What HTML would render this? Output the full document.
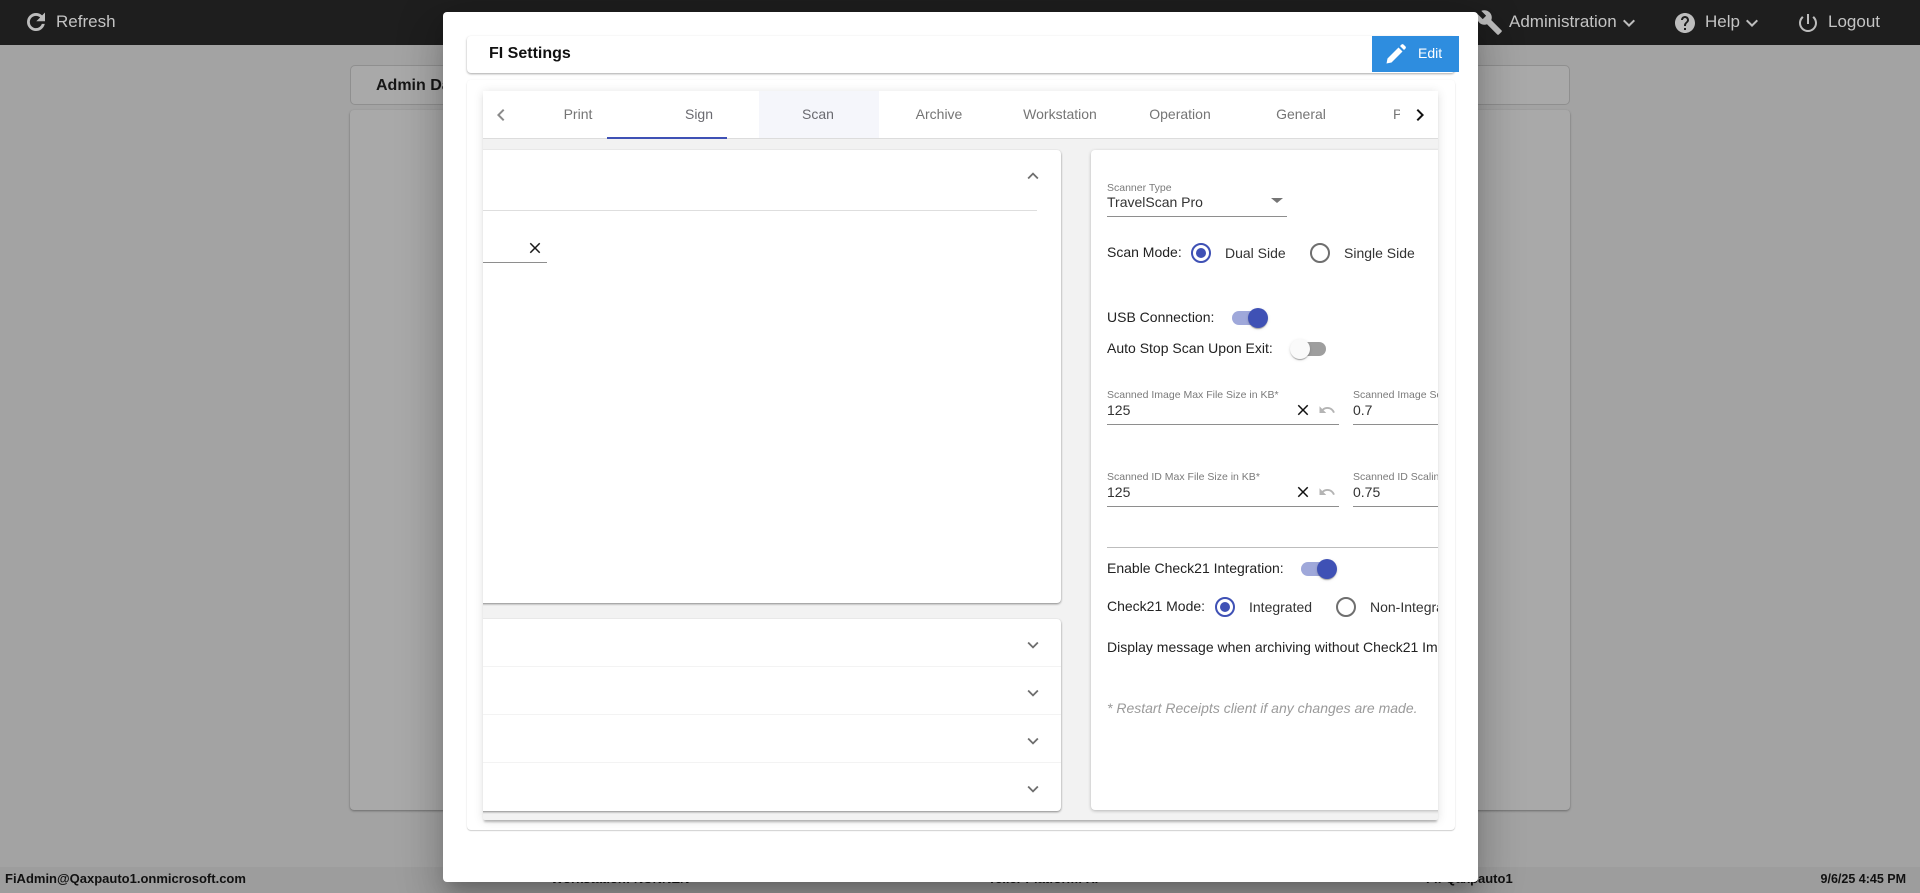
<!DOCTYPE html>
<html lang="en">
<head>
<meta charset="utf-8">
<title>FI Settings</title>
<style>
html,body{margin:0;padding:0;width:1920px;height:893px;overflow:hidden;background:#a3a3a3;font-family:"Liberation Sans",Arial,sans-serif}
*{box-sizing:border-box}
.a{position:absolute}
.t{position:absolute;white-space:nowrap;line-height:16px;font-size:14px}
svg{position:absolute;display:block}
.lbl{font-size:10.5px;color:#7a7a7a}
.val{color:#333}
.dark{color:#222}
.line{position:absolute;height:1px;background:#8e8e8e}
.radio{position:absolute;width:20px;height:20px;border-radius:50%;border:2px solid #6f6f6f;background:#fff}
.radio.on{border-color:#3f51b5}
.radio.on:after{content:"";position:absolute;left:3px;top:3px;width:10px;height:10px;border-radius:50%;background:#3f51b5}
.track{position:absolute;width:34px;height:14px;border-radius:7px}
.thumb{position:absolute;width:20px;height:20px;border-radius:50%;box-shadow:0 2px 1px -1px rgba(0,0,0,.2),0 1px 1px 0 rgba(0,0,0,.14),0 1px 3px 0 rgba(0,0,0,.12)}
.tab{position:absolute;top:0;height:48px;line-height:47px;width:120px;text-align:center;font-size:14px;color:#757575;white-space:nowrap}
.top{position:absolute;white-space:nowrap;font-size:17px;line-height:20px;color:#c4c4c4}
.foot{position:absolute;top:871px;white-space:nowrap;font-size:13px;line-height:16px;font-weight:bold;color:#111}
</style>
</head>
<body>

<!-- dimmed background page -->
<div class="a" style="left:0;top:0;width:1920px;height:45px;background:#1e1e1e"></div>
<svg style="left:23px;top:9px" width="26" height="26" viewBox="0 0 24 24" fill="#bdbdbd" stroke="#bdbdbd" stroke-width=".6"><path d="M17.65 6.35A7.958 7.958 0 0 0 12 4c-4.42 0-7.99 3.58-7.99 8s3.57 8 7.99 8c3.73 0 6.84-2.55 7.73-6h-2.08A5.99 5.99 0 0 1 12 18c-3.31 0-6-2.69-6-6s2.69-6 6-6c1.66 0 3.14.69 4.22 1.78L13 11h7V4l-2.35 2.35z"/></svg>
<div class="top" style="left:56px;top:12px">Refresh</div>
<svg style="left:1476px;top:9px" width="27" height="27" viewBox="0 0 24 24" fill="#bdbdbd"><path d="M22.7 19l-9.1-9.1c.9-2.3.4-5-1.5-6.9-2-2-5-2.4-7.4-1.3L9 6 6 9 1.6 4.7C.4 7.1.9 10.1 2.9 12.1c1.9 1.9 4.6 2.4 6.9 1.5l9.1 9.1c.4.4 1 .4 1.4 0l2.3-2.3c.5-.4.5-1.1.1-1.4z"/></svg>
<div class="top" style="left:1509px;top:12px">Administration</div>
<svg style="left:1617px;top:11px" width="24" height="24" viewBox="0 0 24 24" fill="#bdbdbd"><path d="M16.59 8.59L12 13.17 7.41 8.59 6 10l6 6 6-6z"/></svg>
<svg style="left:1673px;top:11px" width="24" height="24" viewBox="0 0 24 24" fill="#bdbdbd"><path d="M12 2C6.48 2 2 6.48 2 12s4.48 10 10 10 10-4.48 10-10S17.52 2 12 2zm1 17h-2v-2h2v2zm2.07-7.75l-.9.92C13.45 12.9 13 13.5 13 15h-2v-.5c0-1.1.45-2.1 1.17-2.83l1.24-1.26c.37-.36.59-.86.59-1.41 0-1.1-.9-2-2-2s-2 .9-2 2H8c0-2.21 1.79-4 4-4s4 1.79 4 4c0 .88-.36 1.68-.93 2.25z"/></svg>
<div class="top" style="left:1705px;top:12px">Help</div>
<svg style="left:1740px;top:11px" width="24" height="24" viewBox="0 0 24 24" fill="#bdbdbd"><path d="M16.59 8.59L12 13.17 7.41 8.59 6 10l6 6 6-6z"/></svg>
<svg style="left:1796px;top:11px" width="24" height="24" viewBox="0 0 24 24" fill="#bdbdbd"><path d="M13 3h-2v10h2V3zm4.83 2.17l-1.42 1.42C17.99 7.86 19 9.81 19 12c0 3.87-3.13 7-7 7s-7-3.13-7-7c0-2.19 1.01-4.14 2.58-5.42L6.17 5.17C4.23 6.82 3 9.26 3 12c0 4.97 4.03 9 9 9s9-4.03 9-9c0-2.74-1.23-5.18-3.17-6.83z"/></svg>
<div class="top" style="left:1828px;top:12px">Logout</div>

<div class="a" style="left:350px;top:65px;width:1220px;height:40px;background:#a9a9a9;border:1px solid #8f8f8f;border-radius:5px"></div>
<div class="t" style="left:376px;top:78px;font-size:16px;font-weight:bold;color:#161616">Admin Dashboard</div>
<div class="a" style="left:350px;top:110px;width:1220px;height:700px;background:#a9a9a9;border-radius:4px;box-shadow:0 1px 2px rgba(0,0,0,.35)"></div>

<div class="a" style="left:0;top:867px;width:1920px;height:26px;background:#9d9d9d"></div>
<div class="foot" style="left:5px">FiAdmin@Qaxpauto1.onmicrosoft.com</div>
<div class="foot" style="left:551px">Workstation: NUNNEN</div>
<div class="foot" style="left:988px">Teller Platform: XI</div>
<div class="foot" style="left:1426px">FI: Qaxpauto1</div>
<div class="foot" style="left:1800px;width:106px;text-align:right;font-size:12.5px">9/6/25 4:45 PM</div>

<!-- modal -->
<div class="a" style="left:443px;top:12px;width:1035px;height:870px;background:#fff;border-radius:4px;box-shadow:0 11px 15px -7px rgba(0,0,0,.2),0 24px 38px 3px rgba(0,0,0,.14),0 9px 46px 8px rgba(0,0,0,.12)"></div>

<!-- FI settings title card -->
<div class="a" style="left:467px;top:36px;width:988px;height:37px;background:#fff;border-radius:4px;box-shadow:0 1px 2px rgba(0,0,0,.35)"></div>
<div class="t" style="left:489px;top:46px;font-size:16px;font-weight:bold;color:#111">FI Settings</div>
<div class="a" style="left:1372px;top:36px;width:87px;height:36px;background:#2e8ddf"></div>
<svg style="left:1384px;top:42px" width="24" height="24" viewBox="0 0 24 24" fill="#fff"><path d="M2.5 21.5L3.5 16.5 14.5 5.5 18.5 9.5 7.5 20.5zM16 4l1.3-1.3a1.7 1.7 0 0 1 2.4 0l1.6 1.6a1.7 1.7 0 0 1 0 2.4L20 8z"/></svg>
<div class="t" style="left:1418px;top:45px;color:#fff">Edit</div>

<!-- outer card -->
<div class="a" style="left:467px;top:80px;width:988px;height:750px;background:#fff;border-radius:4px;box-shadow:0 1px 1px rgba(0,0,0,.18),0 0 2px rgba(0,0,0,.05)"></div>

<!-- tab panel -->
<div class="a" style="left:483px;top:91px;width:955px;height:729px;background:#f2f2f2;border-radius:2px;box-shadow:0 3px 2px -1px rgba(0,0,0,.26),0 1px 10px rgba(0,0,0,.12)"></div>
<div class="a" style="left:483px;top:91px;width:955px;height:729px;overflow:hidden">
  <!-- tab bar -->
  <div class="a" style="left:0;top:0;width:955px;height:48px;background:#fff;border-bottom:1px solid #dcdcdc">
    <div class="a" style="left:276px;top:0;width:120px;height:47px;background:#f5f6fb"></div>
    <div class="tab" style="left:35px">Print</div>
    <div class="tab" style="left:156px;color:#6a6a70">Sign</div>
    <div class="tab" style="left:275px;color:#6a6a70">Scan</div>
    <div class="tab" style="left:396px">Archive</div>
    <div class="tab" style="left:517px">Workstation</div>
    <div class="tab" style="left:637px">Operation</div>
    <div class="tab" style="left:758px">General</div>
    <div class="t" style="left:910px;top:15px;width:7px;overflow:hidden;color:#757575">Preferences</div>
    <div class="a" style="left:124px;top:46px;width:120px;height:2px;background:#3f51b5"></div>
    <svg style="left:6px;top:12px" width="24" height="24" viewBox="0 0 24 24" fill="#8a8a8a"><path d="M15.41 7.41L14 6l-6 6 6 6 1.41-1.41L10.83 12z"/></svg>
    <div class="a" style="left:920px;top:0;width:35px;height:47px;background:#fff"></div>
    <svg style="left:925px;top:12px" width="24" height="24" viewBox="0 0 24 24" fill="#111"><path d="M10 6L8.59 7.41 13.17 12l-4.58 4.59L10 18l6-6z"/></svg>
  </div>

  <!-- left top card -->
  <div class="a" style="left:-6px;top:59px;width:584px;height:453px;background:#fff;border-radius:4px;box-shadow:0 1px 2px rgba(0,0,0,.45)"></div>
  <svg style="left:539px;top:74px" width="22" height="22" viewBox="0 0 24 24" fill="#6e6e6e"><path d="M12 8l-6 6 1.41 1.41L12 10.83l4.59 4.58L18 14z"/></svg>
  <div class="a" style="left:0;top:119px;width:554px;height:1px;background:#dedede"></div>
  <svg style="left:43px;top:148px" width="18" height="18" viewBox="0 0 24 24" fill="#1a1a1a"><path d="M19 6.41L17.59 5 12 10.59 6.41 5 5 6.41 10.59 12 5 17.59 6.41 19 12 13.41 17.59 19 19 17.59 13.41 12z"/></svg>
  <div class="line" style="left:0;top:171px;width:64px"></div>

  <!-- left lower accordion -->
  <div class="a" style="left:-6px;top:528px;width:584px;height:192px;background:#fff;border-radius:4px;box-shadow:0 1px 2px rgba(0,0,0,.45)"></div>
  <div class="a" style="left:0;top:575px;width:578px;height:1px;background:#f3f3f3"></div>
  <div class="a" style="left:0;top:623px;width:578px;height:1px;background:#f3f3f3"></div>
  <div class="a" style="left:0;top:671px;width:578px;height:1px;background:#f3f3f3"></div>
  <svg style="left:539px;top:543px" width="22" height="22" viewBox="0 0 24 24" fill="#6e6e6e"><path d="M16.59 8.59L12 13.17 7.41 8.59 6 10l6 6 6-6z"/></svg>
  <svg style="left:539px;top:591px" width="22" height="22" viewBox="0 0 24 24" fill="#6e6e6e"><path d="M16.59 8.59L12 13.17 7.41 8.59 6 10l6 6 6-6z"/></svg>
  <svg style="left:539px;top:639px" width="22" height="22" viewBox="0 0 24 24" fill="#6e6e6e"><path d="M16.59 8.59L12 13.17 7.41 8.59 6 10l6 6 6-6z"/></svg>
  <svg style="left:539px;top:687px" width="22" height="22" viewBox="0 0 24 24" fill="#6e6e6e"><path d="M16.59 8.59L12 13.17 7.41 8.59 6 10l6 6 6-6z"/></svg>

  <!-- right card -->
  <div class="a" style="left:608px;top:59px;width:360px;height:660px;background:#fff;border-radius:4px;box-shadow:0 1px 3px rgba(0,0,0,.25)"></div>

  <div class="t lbl" style="left:624px;top:89px">Scanner Type</div>
  <div class="t val" style="left:624px;top:103px">TravelScan Pro</div>
  <div class="a" style="left:788px;top:107px;width:0;height:0;border-left:6px solid transparent;border-right:6px solid transparent;border-top:5px solid #757575"></div>
  <div class="line" style="left:624px;top:125px;width:180px"></div>

  <div class="t dark" style="left:624px;top:153px">Scan Mode:</div>
  <div class="radio on" style="left:708px;top:152px"></div>
  <div class="t val" style="left:742px;top:154px">Dual Side</div>
  <div class="radio" style="left:827px;top:152px"></div>
  <div class="t val" style="left:861px;top:154px">Single Side</div>

  <div class="t dark" style="left:624px;top:218px">USB Connection:</div>
  <div class="track" style="left:749px;top:220px;background:#9fa8da"></div>
  <div class="thumb" style="left:765px;top:217px;background:#3f51b5"></div>

  <div class="t dark" style="left:624px;top:249px">Auto Stop Scan Upon Exit:</div>
  <div class="track" style="left:809px;top:251px;background:#9e9e9e"></div>
  <div class="thumb" style="left:807px;top:248px;background:#fafafa"></div>

  <div class="t lbl" style="left:624px;top:296px">Scanned Image Max File Size in KB*</div>
  <div class="t val" style="left:624px;top:311px">125</div>
  <svg style="left:811px;top:310px" width="18" height="18" viewBox="0 0 24 24" fill="#111"><path d="M19 6.41L17.59 5 12 10.59 6.41 5 5 6.41 10.59 12 5 17.59 6.41 19 12 13.41 17.59 19 19 17.59 13.41 12z"/></svg>
  <svg style="left:835px;top:310px" width="18" height="18" viewBox="0 0 24 24" fill="#b4b4b4"><path d="M12.5 8c-2.65 0-5.05.99-6.9 2.6L2 7v9h9l-3.62-3.62c1.39-1.16 3.16-1.88 5.12-1.88 3.54 0 6.55 2.31 7.6 5.5l2.37-.78C21.08 11.03 17.15 8 12.5 8z"/></svg>
  <div class="line" style="left:624px;top:333px;width:232px"></div>
  <div class="a" style="left:870px;top:290px;width:85px;height:50px;overflow:hidden">
    <div class="t lbl" style="left:0;top:6px">Scanned Image Scaling Factor</div>
    <div class="t val" style="left:0;top:21px">0.7</div>
    <div class="line" style="left:0;top:43px;width:85px"></div>
  </div>

  <div class="t lbl" style="left:624px;top:378px">Scanned ID Max File Size in KB*</div>
  <div class="t val" style="left:624px;top:393px">125</div>
  <svg style="left:811px;top:392px" width="18" height="18" viewBox="0 0 24 24" fill="#111"><path d="M19 6.41L17.59 5 12 10.59 6.41 5 5 6.41 10.59 12 5 17.59 6.41 19 12 13.41 17.59 19 19 17.59 13.41 12z"/></svg>
  <svg style="left:835px;top:392px" width="18" height="18" viewBox="0 0 24 24" fill="#b4b4b4"><path d="M12.5 8c-2.65 0-5.05.99-6.9 2.6L2 7v9h9l-3.62-3.62c1.39-1.16 3.16-1.88 5.12-1.88 3.54 0 6.55 2.31 7.6 5.5l2.37-.78C21.08 11.03 17.15 8 12.5 8z"/></svg>
  <div class="line" style="left:624px;top:415px;width:232px"></div>
  <div class="a" style="left:870px;top:372px;width:85px;height:50px;overflow:hidden">
    <div class="t lbl" style="left:0;top:6px">Scanned ID Scaling Factor</div>
    <div class="t val" style="left:0;top:21px">0.75</div>
    <div class="line" style="left:0;top:43px;width:85px"></div>
  </div>

  <div class="a" style="left:624px;top:456px;width:331px;height:1px;background:#bdbdbd"></div>

  <div class="t dark" style="left:624px;top:469px">Enable Check21 Integration:</div>
  <div class="track" style="left:818px;top:471px;background:#9fa8da"></div>
  <div class="thumb" style="left:834px;top:468px;background:#3f51b5"></div>

  <div class="t dark" style="left:624px;top:507px">Check21 Mode:</div>
  <div class="radio on" style="left:732px;top:506px"></div>
  <div class="t val" style="left:766px;top:508px">Integrated</div>
  <div class="radio" style="left:853px;top:506px"></div>
  <div class="t val" style="left:887px;top:508px">Non-Integrated</div>

  <div class="t dark" style="left:624px;top:548px">Display message when archiving without Check21 Images</div>

  <div class="t" style="left:624px;top:609px;font-style:italic;color:#9a9a9a">* Restart Receipts client if any changes are made.</div>
</div>

</body>
</html>
